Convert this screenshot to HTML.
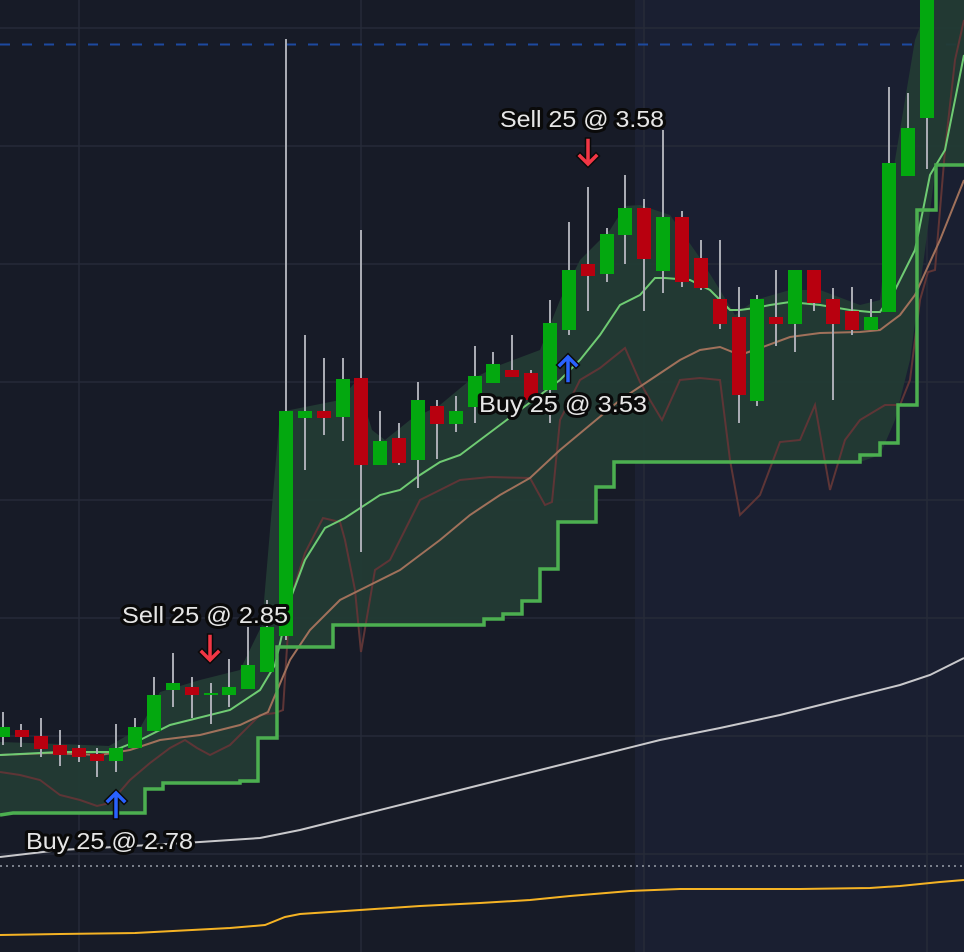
<!DOCTYPE html>
<html><head><meta charset="utf-8"><style>
html,body{margin:0;padding:0;background:#171b27;}
svg{display:block}
text{font-family:"Liberation Sans",sans-serif;font-size:23px;fill:#e6e6e6;stroke:#0a0a0a;stroke-width:6px;paint-order:stroke;stroke-linejoin:round}
</style></head><body>
<svg width="964" height="952" viewBox="0 0 964 952" xmlns="http://www.w3.org/2000/svg">
<rect width="964" height="952" fill="#171b27"/>
<rect x="635" y="0" width="329" height="952" fill="#1a1f31"/>
<rect x="635" y="0" width="9" height="952" fill="#1c2133"/>
<g stroke="#262b38" stroke-width="1.5">
<line x1="79" y1="0" x2="79" y2="952"/><line x1="361" y1="0" x2="361" y2="952"/><line x1="644" y1="0" x2="644" y2="952"/><line x1="927" y1="0" x2="927" y2="952"/>
<line x1="0" y1="28" x2="964" y2="28"/><line x1="0" y1="146" x2="964" y2="146"/><line x1="0" y1="264" x2="964" y2="264"/><line x1="0" y1="382" x2="964" y2="382"/><line x1="0" y1="500" x2="964" y2="500"/><line x1="0" y1="618" x2="964" y2="618"/><line x1="0" y1="736" x2="964" y2="736"/><line x1="0" y1="854" x2="964" y2="854"/>
</g>
<line x1="0" y1="44.5" x2="964" y2="44.5" stroke="#1d4aa0" stroke-width="2" stroke-dasharray="10 12"/>
<line x1="0" y1="866" x2="964" y2="866" stroke="#9aa0aa" stroke-width="1.5" stroke-dasharray="2 4"/>
<polygon fill="#233b34" opacity="0.95" points="0,742 60,744 109,746 140,728 160,692 200,680 240,670 262,625 280,412 340,400 357,380 372,430 385,440 410,420 440,405 470,380 500,365 540,350 560,300 580,260 610,230 625,206 640,205 670,215 700,258 720,290 735,315 755,300 790,290 820,290 860,305 880,300 895,160 915,40 930,0 964,0 964,165 936,165 925,250 910,360 895,420 880,455 860,462 614,462 614,487 596,487 596,522 558,522 558,569 540,569 540,601 522,601 522,614 503,614 503,619 484,619 484,625 333,625 333,647 277,647 277,738 258,738 258,783 163,783 163,789 145,789 145,813 0,815"/>
<polyline fill="none" stroke="#c9c9cc" stroke-width="2" points="0,857 60,850 150,845 200,842 260,838 300,830 360,815 420,800 480,785 540,770 600,755 660,740 720,728 780,715 840,700 900,685 930,675 964,658"/>
<polyline fill="none" stroke="#f5b324" stroke-width="2" points="0,935 60,934 135,933 230,928 265,925 285,917 300,914 360,910 420,906 480,903 530,900 570,896 630,891 680,889 740,889 800,889 870,888 900,886 940,882 964,880"/>
<polyline fill="none" stroke="#5e3536" stroke-width="2" points="0,772 20,775 40,780 60,795 80,800 97,806 110,803 130,780 150,763 170,748 185,740 197,748 210,755 230,745 260,715 275,713 283,710 290,600 305,553 323,518 340,522 345,540 355,590 361,652 375,570 390,560 405,530 420,500 440,490 460,480 490,477 530,478 545,505 552,502 560,420 580,380 600,368 625,348 640,382 650,400 662,420 680,380 700,378 720,380 730,460 740,515 760,495 780,442 800,440 815,405 830,490 845,440 860,420 885,405 900,405 910,380 920,300 928,272 935,270 945,150 955,60 964,20"/>
<polyline fill="none" stroke="#a0715b" stroke-width="2" points="0,755 50,753 100,755 130,750 160,740 200,735 240,725 268,712 290,660 310,630 340,600 370,585 400,570 420,555 440,540 470,515 500,495 530,478 560,450 590,425 620,400 650,380 680,360 700,350 720,347 740,355 760,348 790,337 820,333 860,332 880,330 900,315 915,295 940,240 964,180"/>
<polyline fill="none" stroke="#6fcb73" stroke-width="2" points="0,755 60,752 110,752 140,740 170,725 230,710 260,690 275,665 290,600 305,560 325,528 345,518 380,495 400,490 420,475 440,462 460,455 480,440 500,425 520,410 540,395 560,380 580,360 600,335 620,305 640,295 655,278 665,278 690,280 710,290 730,310 740,310 755,308 770,305 790,302 820,305 850,310 870,312 880,312 895,290 915,250 930,175 945,150 964,55"/>
<polyline fill="none" stroke="#4caf50" stroke-width="3.5" points="0,815 13,813 145,813 145,789 163,789 163,783 240,783 240,781 258,781 258,738 277,738 277,647 333,647 333,625 484,625 484,619 503,619 503,614 522,614 522,601 540,601 540,569 558,569 558,522 596,522 596,487 614,487 614,462 860,462 860,455 880,455 880,443 898,443 898,405 917,405 917,210 936,210 936,165 964,165"/>
<g stroke="#a9abb3" stroke-width="2">
<line x1="3" y1="712" x2="3" y2="745"/><line x1="21" y1="724" x2="21" y2="747"/><line x1="41" y1="718" x2="41" y2="757"/><line x1="60" y1="730" x2="60" y2="766"/><line x1="79" y1="745" x2="79" y2="762"/><line x1="97" y1="748" x2="97" y2="777"/><line x1="116" y1="724" x2="116" y2="772"/><line x1="135" y1="718" x2="135" y2="748"/><line x1="154" y1="677" x2="154" y2="731"/><line x1="173" y1="653" x2="173" y2="707"/><line x1="192" y1="677" x2="192" y2="718"/><line x1="211" y1="683" x2="211" y2="724"/><line x1="229" y1="659" x2="229" y2="707"/><line x1="248" y1="627" x2="248" y2="689"/><line x1="267" y1="600" x2="267" y2="672"/>
<line x1="286" y1="39" x2="286" y2="640"/><line x1="305" y1="335" x2="305" y2="470"/><line x1="324" y1="358" x2="324" y2="435"/><line x1="343" y1="358" x2="343" y2="441"/><line x1="361" y1="230" x2="361" y2="552"/><line x1="380" y1="411" x2="380" y2="465"/><line x1="399" y1="423" x2="399" y2="465"/><line x1="418" y1="382" x2="418" y2="488"/><line x1="437" y1="400" x2="437" y2="459"/><line x1="456" y1="396" x2="456" y2="432"/><line x1="475" y1="346" x2="475" y2="423"/><line x1="493" y1="352" x2="493" y2="383"/><line x1="512" y1="335" x2="512" y2="377"/><line x1="531" y1="370" x2="531" y2="400"/><line x1="550" y1="300" x2="550" y2="423"/>
<line x1="569" y1="222" x2="569" y2="335"/><line x1="588" y1="187" x2="588" y2="311"/><line x1="607" y1="228" x2="607" y2="282"/><line x1="625" y1="175" x2="625" y2="264"/><line x1="644" y1="199" x2="644" y2="311"/><line x1="663" y1="130" x2="663" y2="293"/><line x1="682" y1="211" x2="682" y2="287"/><line x1="701" y1="240" x2="701" y2="290"/><line x1="720" y1="240" x2="720" y2="329"/><line x1="739" y1="287" x2="739" y2="423"/><line x1="757" y1="295" x2="757" y2="406"/><line x1="776" y1="270" x2="776" y2="346"/><line x1="795" y1="270" x2="795" y2="352"/><line x1="814" y1="270" x2="814" y2="311"/><line x1="833" y1="288" x2="833" y2="400"/><line x1="852" y1="287" x2="852" y2="335"/><line x1="871" y1="299" x2="871" y2="330"/><line x1="889" y1="87" x2="889" y2="312"/><line x1="908" y1="93" x2="908" y2="176"/><line x1="927" y1="0" x2="927" y2="169"/>
</g>
<g fill="#03a80f">
<rect x="-4" y="727" width="14" height="10"/><rect x="109" y="748" width="14" height="13"/><rect x="128" y="727" width="14" height="21"/><rect x="147" y="695" width="14" height="36"/><rect x="166" y="683" width="14" height="7"/><rect x="204" y="693" width="14" height="2"/><rect x="222" y="687" width="14" height="8"/><rect x="241" y="665" width="14" height="24"/><rect x="260" y="627" width="14" height="45"/>
<rect x="279" y="411" width="14" height="225"/><rect x="298" y="411" width="14" height="7"/><rect x="336" y="379" width="14" height="38"/><rect x="373" y="441" width="14" height="24"/><rect x="411" y="400" width="14" height="60"/><rect x="449" y="411" width="14" height="13"/><rect x="468" y="376" width="14" height="31"/><rect x="486" y="364" width="14" height="19"/><rect x="543" y="323" width="14" height="67"/>
<rect x="562" y="270" width="14" height="60"/><rect x="600" y="234" width="14" height="40"/><rect x="618" y="208" width="14" height="27"/><rect x="656" y="217" width="14" height="54"/><rect x="750" y="299" width="14" height="102"/><rect x="788" y="270" width="14" height="54"/><rect x="864" y="317" width="14" height="13"/><rect x="882" y="163" width="14" height="149"/><rect x="901" y="128" width="14" height="48"/><rect x="920" y="0" width="14" height="118"/>
</g>
<g fill="#b8000f">
<rect x="15" y="730" width="14" height="7"/><rect x="34" y="736" width="14" height="13"/><rect x="53" y="745" width="14" height="10"/><rect x="72" y="748" width="14" height="9"/><rect x="90" y="754" width="14" height="7"/><rect x="185" y="687" width="14" height="8"/>
<rect x="317" y="411" width="14" height="7"/><rect x="354" y="378" width="14" height="87"/><rect x="392" y="438" width="14" height="25"/><rect x="430" y="406" width="14" height="18"/><rect x="505" y="370" width="14" height="7"/><rect x="524" y="373" width="14" height="27"/>
<rect x="581" y="264" width="14" height="12"/><rect x="637" y="208" width="14" height="51"/><rect x="675" y="217" width="14" height="65"/><rect x="694" y="258" width="14" height="30"/><rect x="713" y="299" width="14" height="25"/><rect x="732" y="317" width="14" height="78"/><rect x="769" y="317" width="14" height="7"/><rect x="807" y="270" width="14" height="33"/><rect x="826" y="299" width="14" height="25"/><rect x="845" y="311" width="14" height="19"/>
</g>
<g stroke="#0a0a0a" stroke-width="1.5" stroke-linejoin="miter">
<path d="M585.5,138 h5 v20 l5.5,-5.5 l3.5,3.5 l-11.5,11.5 l-11.5,-11.5 l3.5,-3.5 l5.5,5.5 z" fill="#f23645"/>
<path d="M207.5,634 h5 v20 l5.5,-5.5 l3.5,3.5 l-11.5,11.5 l-11.5,-11.5 l3.5,-3.5 l5.5,5.5 z" fill="#f23645"/>
<path d="M565.5,383 h5 v-20 l5.5,5.5 l3.5,-3.5 l-11.5,-11.5 l-11.5,11.5 l3.5,3.5 l5.5,-5.5 z" fill="#2962ff"/>
<path d="M113.5,819 h5 v-20 l5.5,5.5 l3.5,-3.5 l-11.5,-11.5 l-11.5,11.5 l3.5,3.5 l5.5,-5.5 z" fill="#2962ff"/>
</g>
<text x="500" y="127" textLength="164" lengthAdjust="spacingAndGlyphs">Sell 25 @ 3.58</text>
<text x="479" y="412" textLength="168" lengthAdjust="spacingAndGlyphs">Buy 25 @ 3.53</text>
<text x="122" y="623" textLength="166" lengthAdjust="spacingAndGlyphs">Sell 25 @ 2.85</text>
<text x="26" y="849" textLength="167" lengthAdjust="spacingAndGlyphs">Buy 25 @ 2.78</text>
</svg>
</body></html>
